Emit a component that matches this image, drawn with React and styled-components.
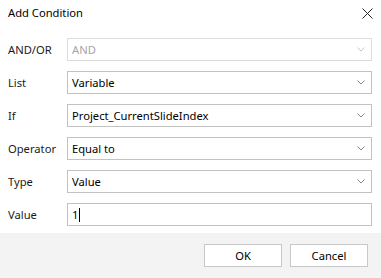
import React from "react";
import styled, { createGlobalStyle } from "styled-components";

const GlobalStyle = createGlobalStyle`
  html, body {
    margin: 0;
    padding: 0;
    background: #ffffff;
  }
  body {
    font-family: "Segoe UI", "Noto Sans", "Open Sans", sans-serif;
    font-size: 11px;
    color: #000;
  }
`;

const Dialog = styled.div`
  width: 381px;
  height: 278px;
  display: flex;
  flex-direction: column;
  background: #ffffff;
  overflow: hidden;
`;

const Header = styled.div`
  height: 26px;
  display: flex;
  align-items: center;
  justify-content: space-between;
  padding: 0 8px 0 8px;
`;

const Title = styled.span`
  font-size: 11.2px;
  color: #000;
  line-height: 1;
`;

const CloseButton = styled.button`
  width: 12px;
  height: 12px;
  padding: 0;
  border: none;
  background: transparent;
  display: flex;
  align-items: center;
  justify-content: center;
`;

const Form = styled.div`
  display: flex;
  flex-direction: column;
  gap: 10px;
  padding: 12px 9px 0 8px;
`;

const Row = styled.div`
  display: grid;
  grid-template-columns: 59px 1fr;
  align-items: center;
  height: 23px;
`;

const Label = styled.span`
  font-size: 11.2px;
  color: #1a1a1a;
`;

const Field = styled.div`
  height: 23px;
  box-sizing: border-box;
  border: 1px solid ${(p) => (p.$disabled ? "#dcdcdc" : "#c2c2c2")};
  background: #fff;
  display: flex;
  align-items: center;
  justify-content: space-between;
  padding: 0 6px 0 4px;
  color: ${(p) => (p.$disabled ? "#a6a6a6" : "#000")};
  font-size: 11.2px;
`;

const Caret = styled.span`
  display: inline-block;
  width: 1px;
  height: 14px;
  background: #000;
  margin-left: 1px;
`;

const ValueText = styled.span`
  display: flex;
  align-items: center;
`;

const Footer = styled.div`
  margin-top: 7px;
  flex: 1;
  background: #f3f3f4;
  display: flex;
  justify-content: flex-end;
  align-items: flex-start;
  gap: 8px;
  padding: 11px 13px 0 0;
`;

const Button = styled.button`
  width: 78px;
  height: 23px;
  box-sizing: border-box;
  background: #fff;
  border: 1px solid #c8c8c8;
  font-family: inherit;
  font-size: 11.2px;
  color: #000;
  padding: 0;
`;

const Chevron = ({ color = "#8a8a8a" }) => (
  <svg width="8" height="5" viewBox="0 0 8 5">
    <polyline points="0.5,0.5 4,4 7.5,0.5" fill="none" stroke={color} strokeWidth="1" />
  </svg>
);

const rows = [
  { label: "AND/OR", value: "AND", disabled: true, select: true },
  { label: "List", value: "Variable", select: true },
  { label: "If", value: "Project_CurrentSlideIndex", select: true },
  { label: "Operator", value: "Equal to", select: true },
  { label: "Type", value: "Value", select: true },
  { label: "Value", value: "1", caret: true },
];

export default function App() {
  return (
    <>
      <GlobalStyle />
      <Dialog>
        <Header>
          <Title>Add Condition</Title>
          <CloseButton aria-label="Close">
            <svg width="11" height="11" viewBox="0 0 11 11">
              <path d="M0.5 0.5 L10.5 10.5 M10.5 0.5 L0.5 10.5" stroke="#222" strokeWidth="1" />
            </svg>
          </CloseButton>
        </Header>
        <Form>
          {rows.map((r) => (
            <Row key={r.label}>
              <Label>{r.label}</Label>
              <Field $disabled={r.disabled}>
                <ValueText>
                  {r.value}
                  {r.caret && <Caret />}
                </ValueText>
                {r.select && <Chevron color={r.disabled ? "#c4c4c4" : "#8a8a8a"} />}
              </Field>
            </Row>
          ))}
        </Form>
        <Footer>
          <Button>OK</Button>
          <Button>Cancel</Button>
        </Footer>
      </Dialog>
    </>
  );
}
